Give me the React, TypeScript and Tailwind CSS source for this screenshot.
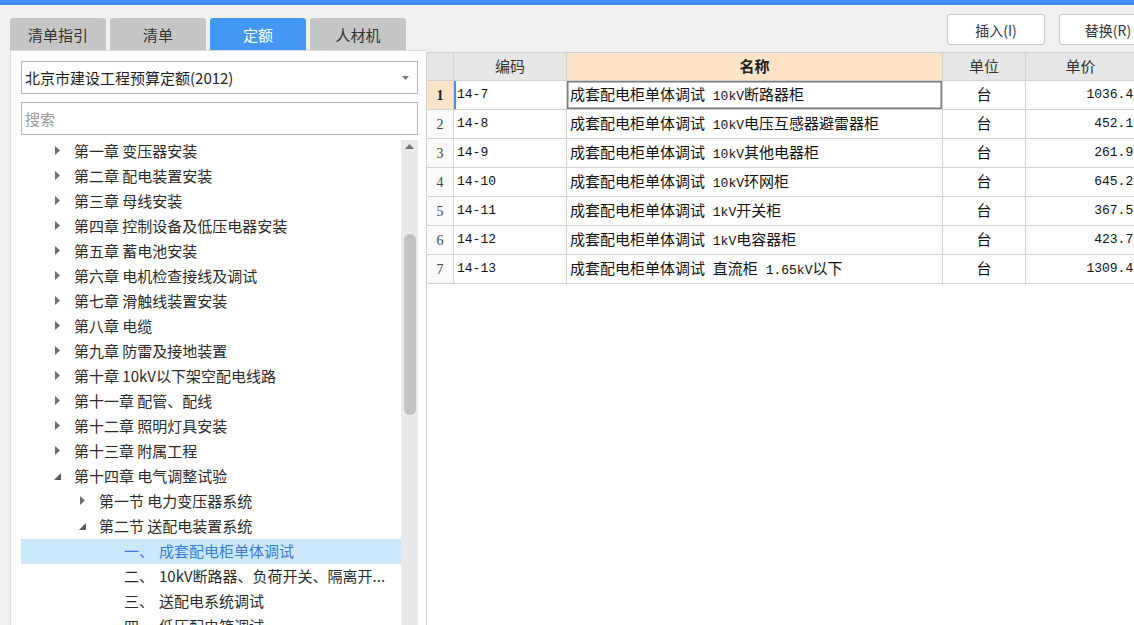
import React from "react";

type TNode = {
  level: 1 | 2 | 3;
  text: string;
  prefix?: string;
  state: "closed" | "open" | "leaf";
  selected?: boolean;
};

const tree: TNode[] = [
  { level: 1, text: "第一章 变压器安装", state: "closed" },
  { level: 1, text: "第二章 配电装置安装", state: "closed" },
  { level: 1, text: "第三章 母线安装", state: "closed" },
  { level: 1, text: "第四章 控制设备及低压电器安装", state: "closed" },
  { level: 1, text: "第五章 蓄电池安装", state: "closed" },
  { level: 1, text: "第六章 电机检查接线及调试", state: "closed" },
  { level: 1, text: "第七章 滑触线装置安装", state: "closed" },
  { level: 1, text: "第八章 电缆", state: "closed" },
  { level: 1, text: "第九章 防雷及接地装置", state: "closed" },
  { level: 1, text: "第十章 10kV以下架空配电线路", state: "closed" },
  { level: 1, text: "第十一章 配管、配线", state: "closed" },
  { level: 1, text: "第十二章 照明灯具安装", state: "closed" },
  { level: 1, text: "第十三章 附属工程", state: "closed" },
  { level: 1, text: "第十四章 电气调整试验", state: "open" },
  { level: 2, text: "第一节 电力变压器系统", state: "closed" },
  { level: 2, text: "第二节 送配电装置系统", state: "open" },
  { level: 3, prefix: "一、", text: "成套配电柜单体调试", state: "leaf", selected: true },
  { level: 3, prefix: "二、", text: "10kV断路器、负荷开关、隔离开...", state: "leaf" },
  { level: 3, prefix: "三、", text: "送配电系统调试", state: "leaf" },
  { level: 3, prefix: "四、", text: "低压配电箱调试", state: "leaf" },
];

const rows = [
  { code: "14-7", name: "成套配电柜单体调试 10kV断路器柜", unit: "台", price: "1036.43" },
  { code: "14-8", name: "成套配电柜单体调试 10kV电压互感器避雷器柜", unit: "台", price: "452.18" },
  { code: "14-9", name: "成套配电柜单体调试 10kV其他电器柜", unit: "台", price: "261.97" },
  { code: "14-10", name: "成套配电柜单体调试 10kV环网柜", unit: "台", price: "645.22" },
  { code: "14-11", name: "成套配电柜单体调试 1kV开关柜", unit: "台", price: "367.58" },
  { code: "14-12", name: "成套配电柜单体调试 1kV电容器柜", unit: "台", price: "423.75" },
  { code: "14-13", name: "成套配电柜单体调试 直流柜 1.65kV以下", unit: "台", price: "1309.42" },
];

const levelPad: Record<number, string> = {
  1: "pl-[33px]",
  2: "pl-[58px]",
  3: "pl-[103px]",
};

function Mixed({ text }: { text: string }) {
  const parts = text.split(/([ A-Za-z0-9.\-]+)/);
  return (
    <span className="whitespace-pre">
      {parts.map((p, i) =>
        /^[ A-Za-z0-9.\-]+$/.test(p) ? (
          <span key={i} className="font-['Liberation_Mono',monospace] text-[13px]">
            {p}
          </span>
        ) : (
          <span key={i}>{p}</span>
        )
      )}
    </span>
  );
}

function Arrow({ state }: { state: TNode["state"] }) {
  if (state === "closed")
    return (
      <svg width="6" height="9" viewBox="0 0 6 9" className="ml-[1px]">
        <polygon points="0,0 5,4.5 0,9" fill="#6e6e6e" />
      </svg>
    );
  if (state === "open")
    return (
      <svg width="7" height="7" viewBox="0 0 7 7" className="mt-[2px]">
        <polygon points="7,0 7,7 0,7" fill="#5a5a5a" />
      </svg>
    );
  return null;
}

const tabs = ["清单指引", "清单", "定额", "人材机"];

export default function App() {
  return (
    <div className="w-[1134px] h-[625px] bg-[#f0f0f0] flex flex-col overflow-hidden font-['Noto_Sans_CJK_SC','Noto_Sans',sans-serif] text-[#222]">
      <div className="h-[5px] bg-[#3d8ef0] shrink-0" />
      <div className="flex flex-1 min-h-0">
        {/* Left column */}
        <div className="w-[426px] shrink-0 flex flex-col pt-[13px]">
          <div className="flex gap-[4px] pl-[10px] h-[32px] shrink-0">
            {tabs.map((t, i) => (
              <div
                key={t}
                className={
                  "w-[96px] h-[32px] rounded-t-[3px] flex items-center justify-center text-[15px] leading-none " +
                  (i === 2 ? "bg-[#4397f5] text-white" : "bg-[#c6c6c6] text-[#333]")
                }
              >
                {t}
              </div>
            ))}
          </div>
          <div className="ml-[10px] flex-1 min-h-0 bg-white border-l border-t border-[#dcdcdc] flex flex-col pl-[10px] pr-[8px] pt-[10px]">
            <div className="h-[33px] shrink-0 border border-[#b8b8b8] bg-white flex items-center pl-[3px] pr-[8px]">
              <span className="flex-1 text-[15px] leading-none text-[#1e1e1e]">北京市建设工程预算定额(2012)</span>
              <svg width="7" height="4" viewBox="0 0 7 4">
                <polygon points="0,0 7,0 3.5,4" fill="#7a7a7a" />
              </svg>
            </div>
            <div className="h-[33px] shrink-0 mt-[8px] border border-[#b8b8b8] bg-white flex items-center pl-[3px]">
              <span className="text-[15px] leading-none text-[#9a9a9a]">搜索</span>
            </div>
            <div className="mt-[5px] flex flex-1 min-h-0">
              <div className="flex-1 overflow-hidden">
                <div className="-mt-[1px]">
                  {tree.map((n, i) => (
                    <div
                      key={i}
                      className={
                        "h-[25px] flex items-center whitespace-nowrap text-[15px] leading-[23px] pb-[2px] " +
                        levelPad[n.level] +
                        (n.selected ? " bg-[#cce8ff] text-[#3a7bd8]" : " text-[#2a2a2a]")
                      }
                    >
                      {n.level < 3 ? (
                        <>
                          <span className="w-[20px] shrink-0 flex items-center">
                            <Arrow state={n.state} />
                          </span>
                          <span>{n.text}</span>
                        </>
                      ) : (
                        <>
                          <span className="w-[35px] shrink-0">{n.prefix}</span>
                          <span>{n.text}</span>
                        </>
                      )}
                    </div>
                  ))}
                </div>
              </div>
              <div className="w-[17px] shrink-0 bg-[#e9e9e9] flex flex-col items-center">
                <svg width="9" height="5" viewBox="0 0 9 5" className="mt-[4px]">
                  <polygon points="0,5 9,5 4.5,0" fill="#707070" />
                </svg>
                <div className="w-[12px] h-[181px] mt-[85px] rounded-full bg-[#c2c2c2]" />
              </div>
            </div>
          </div>
        </div>

        {/* Right column */}
        <div className="flex-1 min-w-0 flex flex-col overflow-hidden">
          <div className="h-[47px] shrink-0 flex items-start pt-[9px] pl-[521px] gap-[14px]">
            <div className="w-[98px] h-[31px] shrink-0 bg-white border border-[#c8c8c8] rounded-[3px] flex items-center justify-center text-[14px] text-[#333] leading-none">
              插入(I)
            </div>
            <div className="w-[98px] h-[31px] shrink-0 bg-white border border-[#c8c8c8] rounded-[3px] flex items-center justify-center text-[14px] text-[#333] leading-none">
              替换(R)
            </div>
          </div>
          <div className="flex-1 min-h-0 bg-white border-l border-t border-[#cfcfcf] overflow-hidden">
            <div className="w-[720px]">
              <div className="grid grid-cols-[27px_113px_376px_83px_118px] h-[28px]">
                <div className="bg-[#e6e6e6] border-r border-b border-[#d2d2d2]" />
                <div className="bg-[#e6e6e6] border-r border-b border-[#d2d2d2] flex items-center justify-center text-[15px] text-[#333] pb-[1px]">编码</div>
                <div className="bg-[#fde4c6] border-r border-b border-[#d2d2d2] flex items-center justify-center text-[15px] font-bold text-[#222] pb-[1px]">名称</div>
                <div className="bg-[#e6e6e6] border-r border-b border-[#d2d2d2] flex items-center justify-center text-[15px] text-[#333] pb-[1px]">单位</div>
                <div className="bg-[#e6e6e6] border-r border-b border-[#d2d2d2] flex items-center justify-center text-[15px] text-[#333] pr-[8px] pb-[1px]">单价</div>
              </div>
              {rows.map((r, i) => (
                <div key={r.code} className="grid grid-cols-[27px_113px_376px_83px_118px] h-[29px]">
                  <div
                    className={
                      "border-r border-b border-[#d2d2d2] flex items-center justify-center font-['Liberation_Serif',serif] text-[14px] " +
                      (i === 0 ? "bg-[#fde4c6] font-bold text-[#222]" : "bg-[#fafafa] text-[#444]")
                    }
                  >
                    {i + 1}
                  </div>
                  <div
                    className={
                      "border-r border-b border-[#d2d2d2] flex items-center pl-[3px] font-['Liberation_Mono',monospace] text-[13px] text-[#111] " +
                      (i === 0 ? "shadow-[inset_2px_0_0_#3f8ef0]" : "")
                    }
                  >
                    {r.code}
                  </div>
                  <div
                    className={
                      "border-r border-b border-[#d2d2d2] flex items-center pl-[3px] pb-[1px] text-[15px] text-[#111] whitespace-nowrap overflow-hidden " +
                      (i === 0 ? "shadow-[inset_0_0_0_1.5px_#7d7d7d]" : "")
                    }
                  >
                    <Mixed text={r.name} />
                  </div>
                  <div className="border-r border-b border-[#d2d2d2] flex items-center justify-center text-[15px] text-[#111] pb-[1px]">
                    {r.unit}
                  </div>
                  <div className="border-r border-b border-[#d2d2d2] flex items-center justify-end pr-[2px] font-['Liberation_Mono',monospace] text-[13px] text-[#111]">
                    {r.price}
                  </div>
                </div>
              ))}
            </div>
          </div>
        </div>
      </div>
    </div>
  );
}
